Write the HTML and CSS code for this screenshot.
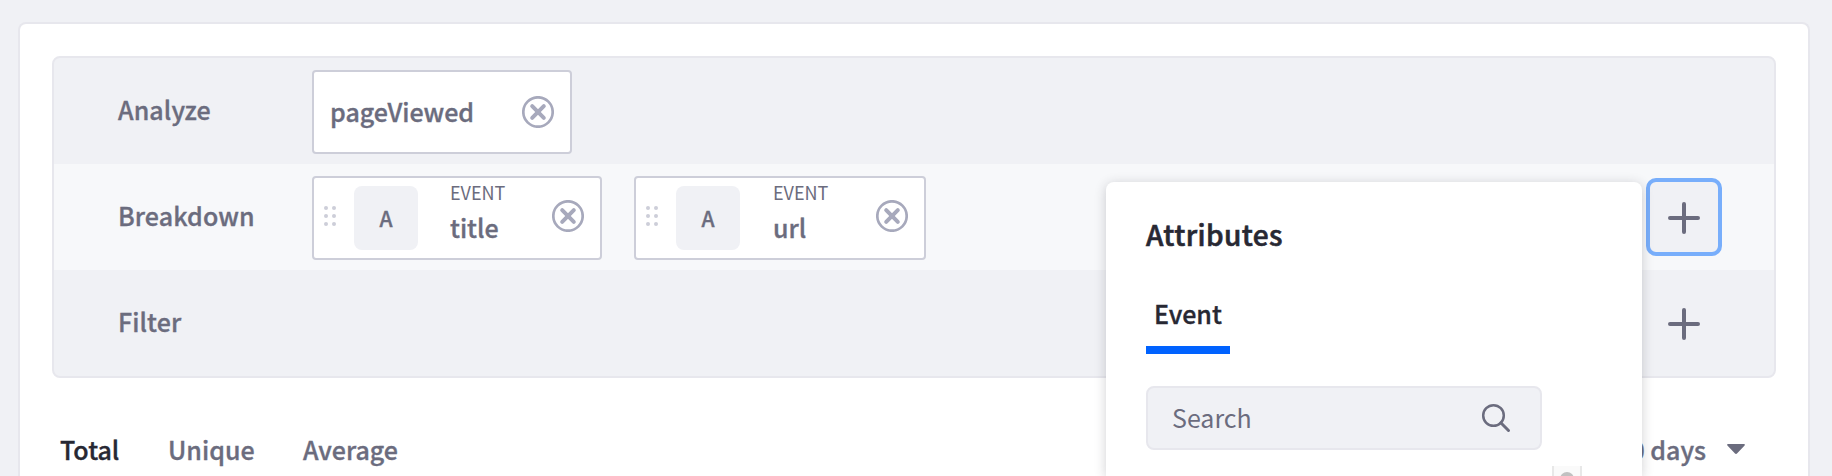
FILE: index.html
```html
<!DOCTYPE html>
<html lang="en">
<head>
<meta charset="utf-8">
<title>Event Analysis</title>
<link rel="stylesheet" href="styles.css">
</head>
<body>
<svg class="defs" width="0" height="0" aria-hidden="true">
  <symbol id="close" viewBox="0 0 32 32"><circle cx="16" cy="16" r="14.7" fill="none" stroke="currentColor" stroke-width="2.7"/><path d="M10.2 10.2l11.6 11.6M21.8 10.2L10.2 21.8" stroke="currentColor" stroke-width="4" stroke-linecap="round"/></symbol>
  <symbol id="drag" viewBox="0 0 12 20"><g fill="currentColor"><circle cx="2" cy="2" r="2"/><circle cx="10" cy="2" r="2"/><circle cx="2" cy="10" r="2"/><circle cx="10" cy="10" r="2"/><circle cx="2" cy="18" r="2"/><circle cx="10" cy="18" r="2"/></g></symbol>
  <symbol id="plus" viewBox="0 0 32 32"><path d="M16 2v28M2 16h28" stroke="currentColor" stroke-width="4" stroke-linecap="round"/></symbol>
</svg>
<main class="card">
  <section class="panel">
    <div class="row">
      <span class="row-label">Analyze</span>
      <div class="chip chip-event"><span class="chip-name">pageViewed</span><svg class="close"><use href="#close"/></svg></div>
    </div>
    <div class="row row-light">
      <span class="row-label">Breakdown</span>
      <div class="chip">
        <svg class="drag"><use href="#drag"/></svg>
        <span class="tile">A</span>
        <div class="attr attr-title"><span class="attr-type">EVENT</span><span class="attr-name">title</span></div>
        <svg class="close"><use href="#close"/></svg>
      </div>
      <div class="chip">
        <svg class="drag"><use href="#drag"/></svg>
        <span class="tile">A</span>
        <div class="attr attr-url"><span class="attr-type">EVENT</span><span class="attr-name">url</span></div>
        <svg class="close"><use href="#close"/></svg>
      </div>
      <button class="add add-focus" aria-label="Add breakdown"><svg class="plus"><use href="#plus"/></svg></button>
    </div>
    <div class="row">
      <span class="row-label">Filter</span>
      <button class="add" aria-label="Add filter"><svg class="plus"><use href="#plus"/></svg></button>
    </div>
  </section>
  <nav class="tabs">
    <span class="tab tab-total">Total</span>
    <span class="tab tab-unique">Unique</span>
    <span class="tab">Average</span>
    <span class="range">Last 30 days<svg class="caret" viewBox="0 0 18 10"><path d="M1 0h16a.8.8 0 0 1 .6 1.4L10 9.5a1.4 1.4 0 0 1-2 0L.4 1.4A.8.8 0 0 1 1 0z" fill="currentColor"/></svg></span>
  </nav>
</main>
<aside class="popup">
  <h2 class="popup-title">Attributes</h2>
  <div class="popup-tab">Event</div>
  <div class="search"><span class="search-text">Search</span>
    <svg class="search-icon" viewBox="0 0 30 30"><circle cx="12.5" cy="12.5" r="10.3" fill="none" stroke="currentColor" stroke-width="2.5"/><path d="M19.8 19.8l7.7 7.7" stroke="currentColor" stroke-width="3" stroke-linecap="round"/></svg>
  </div>
  <div class="scroll"><span class="thumb"></span></div>
</aside>
</body>
</html>
```
FILE: styles.css
```css
* { box-sizing: border-box; }
html { height: 476px; overflow: hidden; }
body {
  margin: 0;
  height: 476px;
  overflow: hidden;
  padding: 22px 22px 0 18px;
  background: #f0f1f5;
  color: #6b6c7e;
  font: 500 25px/36px "Noto Sans CJK SC", "Noto Sans", sans-serif;
  -webkit-text-stroke: .35px currentColor;
}
svg { display: block; flex: none; }
.defs { position: absolute; }
.card {
  height: 454px;
  padding: 32px 32px 0;
  overflow: hidden;
  background: #fff;
  border: 2px solid #e7e7ed;
  border-bottom: 0;
  border-radius: 8px 8px 0 0;
}
.panel {
  border: 2px solid #e7e7ed;
  border-radius: 8px;
  background: #f0f1f5;
}
.row {
  display: flex;
  align-items: center;
  height: 106px;
  padding: 0 52px 0 64px;
}
.row-light { background: #f7f8fa; }
.row-label { width: 194px; padding-bottom: 4px; letter-spacing: .1px; }
.chip {
  display: flex;
  align-items: center;
  height: 84px;
  margin: 2px 32px 0 0;
  background: #fff;
  border: 2px solid #cdced9;
  border-radius: 4px;
}
.chip-event { padding: 0 16px; }
.chip-name { width: 192px; padding-bottom: 2px; }
.close { width: 32px; height: 32px; color: #a7a9bc; margin: 0 16px 4px 0; }
.chip-event .close { margin: 0; }
.drag { width: 12px; height: 20px; margin: 0 18px 4px 10px; color: #cdced9; }
.tile {
  display: flex;
  justify-content: center;
  align-items: center;
  width: 64px;
  height: 64px;
  padding-bottom: 1px;
  background: #f0f1f5;
  border-radius: 8px;
  font-size: 21px;
}
.attr { display: flex; flex-direction: column; margin: 0 0 12px 32px; }
.attr-title { width: 102px; }
.attr-url { width: 104px; padding-left: 1px; }
.attr-type { font-size: 18px; font-weight: 400; line-height: 24px; -webkit-text-stroke: 0; }
.attr-name { margin-top: 5px; line-height: 36px; }
.add {
  display: flex;
  align-items: center;
  justify-content: center;
  width: 76px;
  height: 78px;
  margin-left: auto;
  padding: 2px 0 0;
  color: #6b6c7e;
  background: #f0f1f5;
  border: 4px solid transparent;
  border-radius: 10px;
}
.add-focus { border-color: #78aefb; }
.plus { width: 32px; height: 32px; }
.tabs { display: flex; padding: 53px 31px 0 8px; }
.tab-total { width: 108px; color: #272833; }
.tab-unique { width: 135px; }
.range { display: flex; align-items: center; gap: 21px; margin-left: auto; }
.caret { width: 18px; height: 10px; }
.popup {
  position: absolute;
  left: 1106px;
  top: 182px;
  width: 536px;
  height: 294px;
  padding: 32px 40px 0;
  overflow: hidden;
  background: #fff;
  border-radius: 8px 8px 0 0;
  clip-path: inset(-20px -20px 0 -20px);
  box-shadow: 0 2px 12px rgba(39, 40, 51, .22);
}
.popup-title {
  margin: 0;
  font-size: 28px;
  font-weight: 500;
  line-height: 40px;
  letter-spacing: .4px;
  color: #272833;
  -webkit-text-stroke-width: .6px;
}
.popup-tab {
  width: 84px;
  height: 68px;
  margin-top: 32px;
  padding: 9px 0 0 8px;
  border-bottom: 8px solid #0062ff;
  color: #272833;
}
.search {
  display: flex;
  align-items: center;
  justify-content: space-between;
  width: 396px;
  height: 64px;
  margin-top: 32px;
  padding: 0 29px 0 24px;
  background: #f0f1f5;
  border: 2px solid #e7e7ed;
  border-radius: 8px;
}
.search-text { padding-bottom: 2px; font-weight: 400; -webkit-text-stroke: 0; }
.search-icon { width: 30px; height: 30px; }
.scroll {
  width: 30px;
  height: 20px;
  margin: 16px 0 0 406px;
  padding: 6px 0 0 6px;
  background: #fafafa;
  border: solid #e8e8e8;
  border-width: 0 2px;
}
.thumb { display: block; width: 14px; height: 40px; border-radius: 7px; background: #c1c1c1; }
```
